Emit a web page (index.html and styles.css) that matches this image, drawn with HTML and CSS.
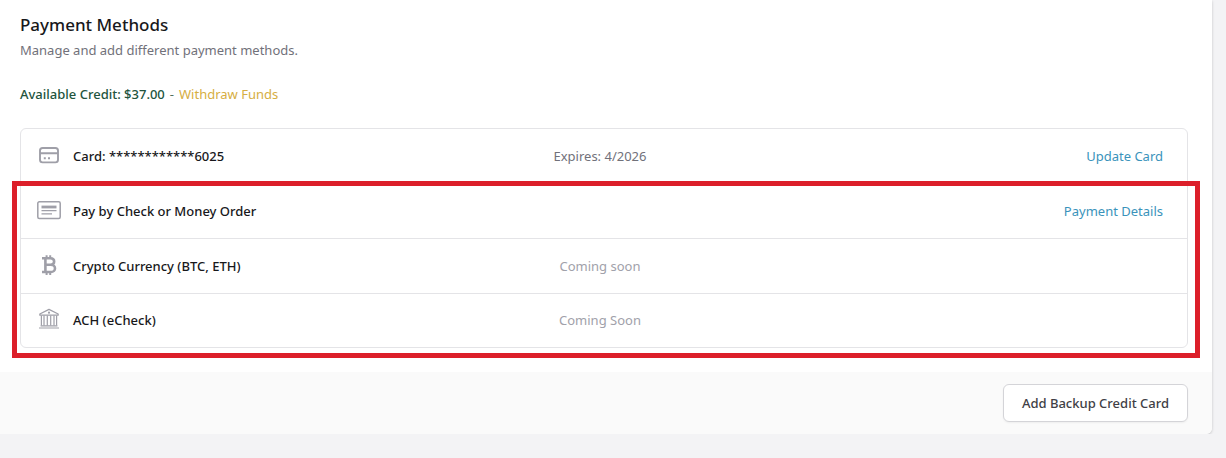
FILE: index.html
```html
<!DOCTYPE html>
<html lang="en">
<head>
    <meta charset="UTF-8">
    <meta name="viewport" content="width=device-width, initial-scale=1.0">
    <title>Payment Methods</title>
    <link rel="stylesheet" href="styles.css">
</head>
<body>
    <main class="card">
        <div class="card-body">
            <h1 class="title">Payment Methods</h1>
            <p class="subtitle">Manage and add different payment methods.</p>
            <p class="credit"><strong>Available Credit: $37.00</strong> <span>-</span> <a class="withdraw" href="#">Withdraw Funds</a></p>

            <div class="methods">
                <ul class="method-list">
                    <li class="method">
                        <div class="method-name">
                            <svg class="icon" viewBox="0 0 24 24" fill="none" stroke="currentColor" stroke-width="1.9">
                                <rect x="3" y="4" width="18" height="14.4" rx="2.6"/>
                                <path d="M3 9.2h18M6.8 14.2h2M11 14.2h2"/>
                            </svg>
                            <span>Card: ************6025</span>
                        </div>
                        <span class="expires">Expires: 4/2026</span>
                        <a class="action" href="#">Update Card</a>
                    </li>
                    <li class="method">
                        <div class="method-name">
                            <svg class="icon" viewBox="0 0 24 24" fill="none" stroke="currentColor">
                                <rect x="0.8" y="2.8" width="22.4" height="16.6" rx="1.5" stroke-width="1.5"/>
                                <path d="M4.5 8h15" stroke-width="2.8"/>
                                <path d="M4.5 11.6h15M4.5 14.8h10.5" stroke-width="1.3"/>
                            </svg>
                            <span>Pay by Check or Money Order</span>
                        </div>
                        <span></span>
                        <a class="action" href="#">Payment Details</a>
                    </li>
                    <li class="method">
                        <div class="method-name">
                            <svg class="icon" viewBox="0 0 24 24" fill="none" stroke="currentColor">
                                <path d="M5 4.2h8.4c5 0 5 6.4 0 6.6M8.6 10.8h5.2c5.6 0 5.6 7.2 0 7.2H5M8.4 4.2v14" stroke-width="2.6"/>
                                <path d="M9.6 1.2v3M13.2 1.2v3M9.6 18v3M13.2 18v3" stroke-width="2"/>
                            </svg>
                            <span>Crypto Currency (BTC, ETH)</span>
                        </div>
                        <span class="soon">Coming soon</span>
                    </li>
                    <li class="method">
                        <div class="method-name">
                            <svg class="icon" viewBox="0 0 24 24" fill="none" stroke="currentColor" stroke-width="1.2">
                                <path d="M2.8 7.2v-1.2L12 1.4l9.2 4.6v1.2zM3.6 17.8h16.8M2 20h20" stroke-linejoin="round"/>
                                <path d="M4.4 7.5v10M7 7.5v10M10.3 7.5v10M13.7 7.5v10M17 7.5v10M19.6 7.5v10"/>
                                <circle cx="12" cy="4.7" r="0.5"/>
                            </svg>
                            <span>ACH (eCheck)</span>
                        </div>
                        <span class="soon">Coming Soon</span>
                    </li>
                </ul>
                <div class="highlight"></div>
            </div>
        </div>

        <div class="card-footer">
            <button class="add-button" type="button">Add Backup Credit Card</button>
        </div>
    </main>
</body>
</html>
```
FILE: styles.css
```css
body {
    margin: 0;
    background-color: #f3f3f5;
    color: #18181b;
    font-family: "Segoe UI", "Noto Sans", sans-serif;
    font-size: 13px;
    line-height: 20px;
}
a {
    text-decoration: none;
}
.card {
    margin-right: 14px;
    background-color: #fff;
    border-radius: 0 0 6px 0;
    box-shadow: 0 1px 3px rgba(0, 0, 0, 0.2);
    overflow: hidden;
}
.card-body {
    padding: 13px 24px 24px 20px;
}
.title {
    margin: 0;
    font-size: 17px;
    font-weight: 500;
    line-height: 24px;
}
.subtitle {
    margin: 3px 0 0;
    color: #71717a;
}
.credit {
    display: flex;
    gap: 5px;
    margin: 24px 0;
    color: #52705f;
}
.credit strong {
    color: #22543d;
    font-weight: 500;
}
.withdraw {
    color: #d6ae42;
}
.methods {
    position: relative;
}
.method-list {
    margin: 0;
    padding: 0;
    list-style: none;
    border: 1px solid #e4e4e7;
    border-radius: 6px;
}
.method {
    display: grid;
    grid-template-columns: 1fr 1fr 1fr;
    align-items: center;
    padding: 15px 24px 15px 16px;
}
.method + .method {
    border-top: 1px solid #e4e4e7;
}
.method:last-child {
    padding-top: 14px;
}
.method-name {
    display: flex;
    align-items: center;
    gap: 12px;
    font-weight: 500;
}
.icon {
    width: 24px;
    height: 24px;
    flex-shrink: 0;
    color: #9f9fa8;
}
.expires {
    color: #71717a;
    text-align: center;
}
.soon {
    color: #a1a1aa;
    text-align: center;
}
.action {
    color: #3a93bb;
    text-align: right;
}
/* red frame around the new payment options */
.highlight {
    position: absolute;
    top: 53px;
    right: -12px;
    bottom: -10px;
    left: -8px;
    border: 5px solid #dc1f2a;
    pointer-events: none;
}
.card-footer {
    display: flex;
    justify-content: flex-end;
    padding: 12px 24px;
    background-color: #fafafa;
}
.add-button {
    padding: 8px 18px;
    border: 1px solid #d4d4d8;
    border-radius: 6px;
    background-color: #fff;
    box-shadow: 0 1px 2px rgba(0, 0, 0, 0.05);
    color: #3f3f46;
    font-family: inherit;
    font-size: 13px;
    font-weight: 500;
    line-height: 20px;
    cursor: pointer;
}
```
